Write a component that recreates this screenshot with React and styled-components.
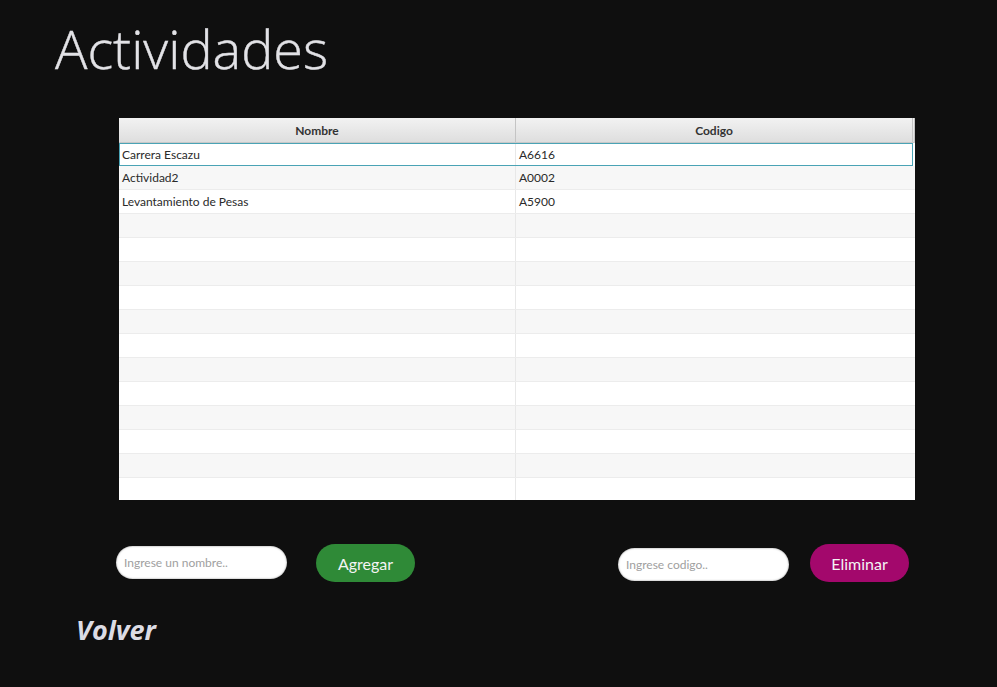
import React from "react";
import styled, { createGlobalStyle } from "styled-components";

const rows = [
  { nombre: "Carrera Escazu", codigo: "A6616" },
  { nombre: "Actividad2", codigo: "A0002" },
  { nombre: "Levantamiento de Pesas", codigo: "A5900" },
];

const TOTAL_ROWS = 15;

const Global = createGlobalStyle`
  html, body {
    margin: 0;
    padding: 0;
    background: #0f0f0f;
  }
  body {
    font-family: Lato, "Open Sans", sans-serif;
  }
`;

const Page = styled.div`
  width: 997px;
  height: 687px;
  background: #0f0f0f;
  overflow: hidden;
  box-sizing: border-box;
  padding-top: 16px;
`;

const Title = styled.h1`
  margin: 0 0 0 55px;
  font-family: "Open Sans", sans-serif;
  font-weight: 300;
  font-size: 54px;
  line-height: 64px;
  color: #e2e2e6;
  -webkit-text-stroke: 0.4px #e2e2e6;
`;

const Table = styled.div`
  margin: 38px 0 0 119px;
  width: 796px;
  height: 382px;
  background: #fff;
  overflow: hidden;
`;

const Header = styled.div`
  display: grid;
  grid-template-columns: 397px 397px 2px;
  height: 25px;
  background: linear-gradient(#f2f2f2, #dedede);
  border-bottom: 1px solid #c8c8c8;
  box-sizing: border-box;
`;

const HeadCell = styled.div`
  display: flex;
  align-items: center;
  justify-content: center;
  font-size: 12px;
  font-weight: 700;
  color: #333;
  border-right: 1px solid #c4c4c4;
`;

const Row = styled.div`
  display: grid;
  grid-template-columns: 397px 399px;
  height: ${(p) => (p.$selected ? 23 : 24)}px;
  box-sizing: border-box;
  background: ${(p) => (p.$alt ? "#f7f7f7" : "#ffffff")};
  border-bottom: 1px solid #ececec;
  outline: ${(p) => (p.$selected ? "1px solid #4aa3b5" : "none")};
  outline-offset: -1px;
  margin-right: ${(p) => (p.$selected ? "2px" : "0")};
`;

const Cell = styled.div`
  display: flex;
  align-items: center;
  padding-left: 3px;
  font-size: 12px;
  color: #2a2a2a;
  border-right: ${(p) => (p.$last ? "none" : "1px solid #e8e8e8")};
`;

const Controls = styled.div`
  display: flex;
  justify-content: space-between;
  align-items: center;
  margin: 44px 88px 0 116px;
`;

const Group = styled.div`
  display: flex;
  align-items: center;
  gap: ${(p) => p.$gap}px;
`;

const Input = styled.input`
  width: 171px;
  height: 33px;
  margin-top: ${(p) => p.$shift || 0}px;
  box-sizing: border-box;
  border: none;
  border-radius: 17px;
  background: #fff;
  box-shadow: inset 0 0 2px rgba(0, 0, 0, 0.5);
  padding: 0 8px;
  font-family: Lato, sans-serif;
  font-size: 12px;
  outline: none;
  &::placeholder {
    color: #a0a0a0;
  }
`;

const Button = styled.button`
  width: 99px;
  height: 38px;
  border: none;
  border-radius: 19px;
  background: ${(p) => p.$color};
  color: #f4f4f4;
  font-family: Lato, sans-serif;
  font-size: 16px;
  cursor: pointer;
`;

const Back = styled.div`
  margin: 33px 0 0 76px;
  font-family: "Open Sans", sans-serif;
  font-style: italic;
  font-weight: 700;
  font-size: 27px;
  line-height: 30px;
  color: #dcdce4;
`;

export default function App() {
  const list = Array.from({ length: TOTAL_ROWS }, (_, i) => rows[i] || null);
  return (
    <Page>
      <Global />
      <Title>Actividades</Title>
      <Table>
        <Header>
          <HeadCell>Nombre</HeadCell>
          <HeadCell>Codigo</HeadCell>
          <HeadCell />
        </Header>
        {list.map((r, i) => (
          <Row key={i} $alt={i % 2 === 1} $selected={i === 0}>
            <Cell>{r ? r.nombre : ""}</Cell>
            <Cell $last>{r ? r.codigo : ""}</Cell>
          </Row>
        ))}
      </Table>
      <Controls>
        <Group $gap={29}>
          <Input $shift={-2} placeholder="Ingrese un nombre.." />
          <Button $color="#2f8a37">Agregar</Button>
        </Group>
        <Group $gap={21}>
          <Input $shift={3} placeholder="Ingrese codigo.." />
          <Button $color="#a3086c">Eliminar</Button>
        </Group>
      </Controls>
      <Back>Volver</Back>
    </Page>
  );
}
